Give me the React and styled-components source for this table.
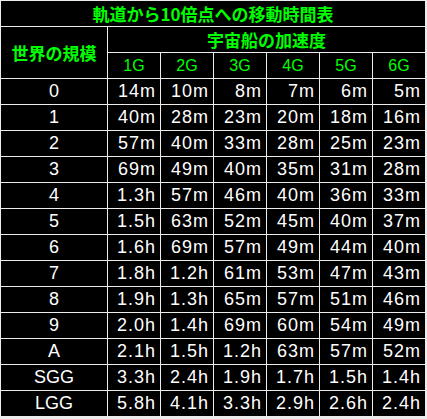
import React from 'react'
import styled, { createGlobalStyle } from 'styled-components';

const GlobalStyle = createGlobalStyle`
    body {
        margin: 0;
        background: #ececec;
    }
`

const Table = styled.table`
    border-collapse: separate;
    border-spacing: 1px;
    table-layout: fixed;
    width: 426px;
    background: #ececec;

    font-family: "Liberation Sans", "Noto Sans CJK JP", sans-serif;
`

const Col = styled.col`
    width: ${props => props.width}px;
`

const Cell = styled.td`
    height: 25px;
    padding: 0;
    background: #000;
    white-space: nowrap;
    line-height: 25px;
`

const TitleCell = styled(Cell)`
    text-align: center;
    color: #00ff00;
    font-family: "Noto Sans CJK JP", sans-serif;
    font-weight: bold;
    font-size: 17px;
`

const HeadCell = styled(Cell)`
    text-align: center;
    color: #00ff00;
    font-family: ${props => props.jp ? '"Noto Sans CJK JP", sans-serif' : '"Liberation Sans", sans-serif'};
    font-weight: ${props => props.jp ? 'bold' : 'normal'};
    font-size: ${props => props.jp ? '17px' : '16px'};
`

const SizeCell = styled(Cell)`
    text-align: center;
    color: #fff;
    font-size: 18px;
`

const ValueCell = styled(Cell)`
    text-align: right;
    padding-right: 4px;
    color: #fff;
    font-size: 18px;
    letter-spacing: 1px;
`

const rows = [
    ['0', '14m', '10m', '8m', '7m', '6m', '5m'],
    ['1', '40m', '28m', '23m', '20m', '18m', '16m'],
    ['2', '57m', '40m', '33m', '28m', '25m', '23m'],
    ['3', '69m', '49m', '40m', '35m', '31m', '28m'],
    ['4', '1.3h', '57m', '46m', '40m', '36m', '33m'],
    ['5', '1.5h', '63m', '52m', '45m', '40m', '37m'],
    ['6', '1.6h', '69m', '57m', '49m', '44m', '40m'],
    ['7', '1.8h', '1.2h', '61m', '53m', '47m', '43m'],
    ['8', '1.9h', '1.3h', '65m', '57m', '51m', '46m'],
    ['9', '2.0h', '1.4h', '69m', '60m', '54m', '49m'],
    ['A', '2.1h', '1.5h', '1.2h', '63m', '57m', '52m'],
    ['SGG', '3.3h', '2.4h', '1.9h', '1.7h', '1.5h', '1.4h'],
    ['LGG', '5.8h', '4.1h', '3.3h', '2.9h', '2.6h', '2.4h'],
]

const accels = ['1G', '2G', '3G', '4G', '5G', '6G']

export default function App() {
    return (
        <>
            <GlobalStyle />
            <Table>
                <colgroup>
                    <Col width={106} />
                    {accels.map(a => <Col key={a} width={52} />)}
                </colgroup>
                <tbody>
                    <tr>
                        <TitleCell colSpan={7}>軌道から10倍点への移動時間表</TitleCell>
                    </tr>
                    <tr>
                        <HeadCell jp rowSpan={2}>世界の規模</HeadCell>
                        <HeadCell jp colSpan={6}>宇宙船の加速度</HeadCell>
                    </tr>
                    <tr>
                        {accels.map(a => <HeadCell key={a}>{a}</HeadCell>)}
                    </tr>
                    {rows.map(([size, ...values]) => (
                        <tr key={size}>
                            <SizeCell>{size}</SizeCell>
                            {values.map((v, i) => <ValueCell key={i}>{v}</ValueCell>)}
                        </tr>
                    ))}
                </tbody>
            </Table>
        </>
    )
}
